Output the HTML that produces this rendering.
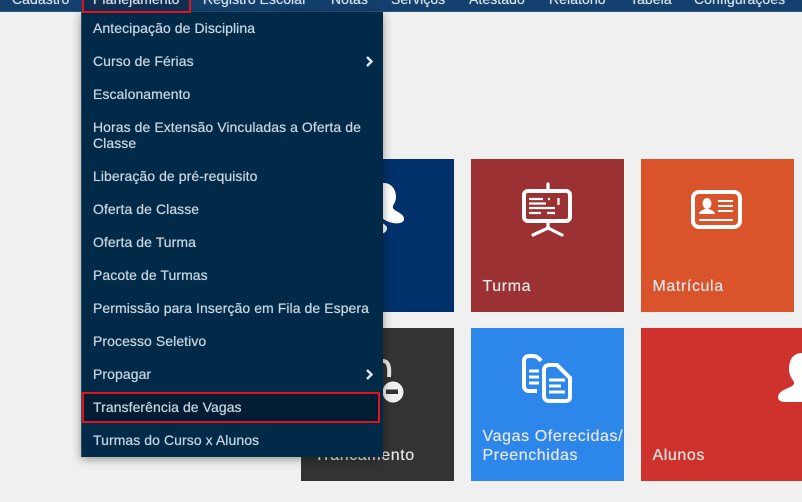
<!DOCTYPE html>
<html lang="pt"><head><meta charset="utf-8"><style>
*{box-sizing:border-box}
html,body{margin:0;padding:0}
body{width:802px;height:502px;overflow:hidden;background:#f0f0f0;position:relative;font-family:"Liberation Sans",sans-serif}
#nav{position:absolute;left:0;top:0;width:802px;height:12px;background:#14406e;border-bottom:1px solid #2f5680;overflow:hidden}
#nav span{position:absolute;top:-9px;font-size:14px;line-height:17px;color:#d5dfe8;white-space:nowrap;letter-spacing:.07px;text-shadow:0 0 .6px #d5dfe8}
#planbg{position:absolute;left:83px;top:0;width:107px;height:12px;background:#112f53}
#plan{position:absolute;left:82px;top:-4px;width:109px;height:17px;border:2px solid #e0141e;z-index:5}
.tile{position:absolute;width:153px;height:153px;overflow:hidden}
.tile .l{position:absolute;left:11.5px;bottom:16px;color:#e8e8e8;font-size:16px;line-height:18px;letter-spacing:.6px;white-space:nowrap;text-shadow:0 0 .5px #e8e8e8}
.tile svg{position:absolute;left:0;top:0}
#menu{position:absolute;left:81px;top:12px;width:302px;height:445px;background:#012a49;box-shadow:0 2px 9px rgba(0,0,0,.4);border-left:1px solid #2c4d68}
#menu div{position:absolute;left:11px;width:280px;font-size:14px;line-height:17px;color:#c8d5df;letter-spacing:.07px;text-shadow:0 0 .6px #c8d5df}
#hl{position:absolute;left:0;top:380px;width:298px;height:31px;border:2px solid #e0141e;background:#011c33}
#menu svg{position:absolute}
</style></head><body>
<div id="nav"><div id="planbg"></div>
<span style="left:12px">Cadastro</span><span style="left:93px">Planejamento</span><span style="left:203px">Registro Escolar</span><span style="left:331px">Notas</span><span style="left:391px">Serviços</span><span style="left:469px">Atestado</span><span style="left:549px">Relatório</span><span style="left:630px">Tabela</span><span style="left:694px">Configurações</span></div>
<div id="plan"></div>

<div class="tile" style="left:301px;top:159px;background:#00316b"><svg width="153" height="153" fill="#fff"><path d="M80 24C90 23 95 30 95 38C95 44 91 46 92 49C94 53 103 54 103 60C103 64 97 65 92 64C88 63 84 62 80 58Z"/><path d="M80 63C83 65 86 67 86 69C86 72 84 74 80 75Z"/></svg></div>
<div class="tile" style="left:471px;top:159px;background:#9b3132"><svg width="153" height="153" fill="none" stroke="#fff"><rect x="53" y="32" width="46" height="30" rx="4" stroke-width="4"/><path d="M77 25V30M77 64V69M62 76L77 69L91 76" stroke-width="3.2" stroke-linecap="round"/><path d="M58 40H72M77 40H79M58 44.5H75M58 49H84M58 54H70M76 54H84M87.5 39V46" stroke-width="2.2"/></svg><div class="l">Turma</div></div>
<div class="tile" style="left:641px;top:159px;background:#d9532b"><svg width="153" height="153" fill="#fff"><rect x="52" y="33" width="47" height="35" rx="6" fill="none" stroke="#fff" stroke-width="4"/><ellipse cx="66" cy="44.5" rx="4.5" ry="5.5"/><path d="M58 55C58 52 62 51 64 50H68C70 51 74 52 74 55Z"/><path d="M77 42H92M77 47H92M77 52H92M58 61H92" stroke="#fff" stroke-width="2"/></svg><div class="l">Matrícula</div></div>

<div class="tile" style="left:301px;top:328px;background:#333"><svg width="153" height="153"><path d="M82 33C87 33 89 38 88 49" stroke="#e8e8e8" stroke-width="4" fill="none"/><circle cx="92" cy="64" r="10.5" fill="#f2f2f2"/><rect x="85" y="61.500" width="12" height="4.500" fill="#333"/></svg><div class="l" style="left:13.500px">Trancamento</div></div>
<div class="tile" style="left:471px;top:328px;background:#2d87ea"><svg width="153" height="153" fill="none" stroke="#fff" stroke-width="4"><path d="M70 33C68 30 65 28 62 28H58C55 28 53 30 53 33V58C53 61 55 63 58 63H66"/><path d="M78 37H86L99 50V69C99 72 97 73 95 73H78C75 73 73 71 73 68V42C73 39 75 37 78 37Z"/><path d="M58 43H68M58 49H68M58 55H68M78 52H94M78 58H90M78 64H94" stroke-width="3"/></svg><div class="l" style="line-height:19px">Vagas Oferecidas/<br>Preenchidas</div></div>
<div class="tile" style="left:641px;top:328px;width:161px;background:#cf322c"><svg width="161" height="153" fill="#fff"><path d="M161 25C152 25 148 32 148 41C148 47 151 51 153 54C154 57 150 59 147 60C142 62 137 65 137 69C137 72 139 74 145 74H161Z"/></svg><div class="l">Alunos</div></div>

<div id="menu">
<div style="top:8px">Antecipação de Disciplina</div>
<div style="top:41px">Curso de Férias</div>
<div style="top:74px">Escalonamento</div>
<div style="top:107px;line-height:16px">Horas de Extensão Vinculadas a Oferta de Classe</div>
<div style="top:156px">Liberação de pré-requisito</div>
<div style="top:189px">Oferta de Classe</div>
<div style="top:222px">Oferta de Turma</div>
<div style="top:255px">Pacote de Turmas</div>
<div style="top:288px">Permissão para Inserção em Fila de Espera</div>
<div style="top:321px">Processo Seletivo</div>
<div style="top:354px">Propagar</div>
<section id="hl"></section>
<div style="top:387px">Transferência de Vagas</div>
<div style="top:420px">Turmas do Curso x Alunos</div>
<svg style="left:283px;top:44px" width="9" height="11"><path d="M2 1L6.500 5.500L2 10" fill="none" stroke="#dde6ed" stroke-width="2.4"/></svg>
<svg style="left:283px;top:357px" width="9" height="11"><path d="M2 1L6.500 5.500L2 10" fill="none" stroke="#dde6ed" stroke-width="2.4"/></svg>
</div>
</body></html>
